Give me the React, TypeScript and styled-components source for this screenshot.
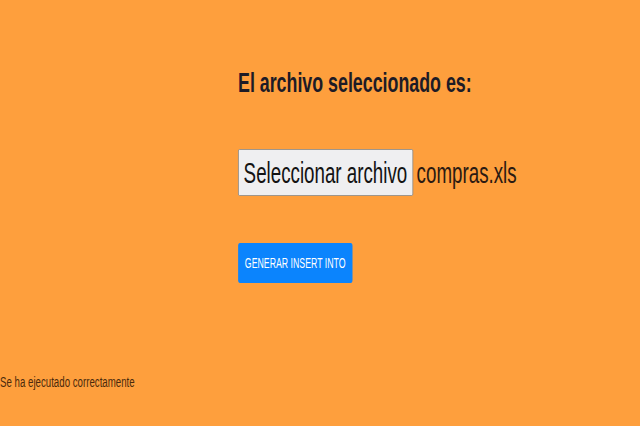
import React from 'react'
import styled, { createGlobalStyle } from 'styled-components'

// the shot is squeezed sideways: the page is laid out at 1024px and scaled to 640
const SQUEEZE = 0.625

const GlobalStyle = createGlobalStyle`
  html, body {
    margin: 0;
    padding: 0;
    background: #fe9f3d;
  }
  body {
    font-family: "Liberation Sans", Arial, sans-serif;
    color: #212529;
  }
`

const Viewport = styled.div`
  width: 640px;
  height: 426px;
  overflow: hidden;
  background: #fe9f3d;
`

const Canvas = styled.div`
  width: ${640 / SQUEEZE}px;
  height: 426px;
  transform: scaleX(${SQUEEZE});
  transform-origin: left top;
  display: flex;
  flex-direction: column;
`

const Main = styled.main`
  display: flex;
  flex-direction: column;
  align-items: flex-start;
  padding: 65px 0 0 ${238 / SQUEEZE}px;
`

const Title = styled.h1`
  margin: 0;
  font-size: 28.5px;
  font-weight: 700;
  line-height: 35px;
  color: #1d1b26;
`

const FileRow = styled.div`
  display: flex;
  align-items: center;
  gap: 6px;
  margin-top: 49px;
`

const FileButton = styled.label`
  box-sizing: border-box;
  height: 47px;
  padding: 0 8px;
  display: flex;
  align-items: center;
  background: #efeff1;
  border: 1px solid #8a8a8a;
  border-radius: 2px;
  font-size: 30px;
  color: #131313;
`

const FileName = styled.span`
  font-size: 30px;
  color: #2b1a12;
`

const ActionButton = styled.button`
  margin-top: 47px;
  height: 40px;
  padding: 0 11px;
  border: none;
  border-radius: 3px;
  background: #0b84fd;
  color: #ffffff;
  font-family: inherit;
  font-size: 14px;
  cursor: pointer;
`

const Status = styled.p`
  margin: 90px 0 0 0;
  font-size: 15.5px;
  line-height: 18px;
  color: #4a2a0c;
`

const App: React.FC = () => {
  return (
    <Viewport>
      <GlobalStyle />
      <Canvas>
        <Main>
          <Title>El archivo seleccionado es:</Title>
          <FileRow>
            <FileButton>Seleccionar archivo</FileButton>
            <FileName>compras.xls</FileName>
          </FileRow>
          <ActionButton>GENERAR INSERT INTO</ActionButton>
        </Main>
        <Status>Se ha ejecutado correctamente</Status>
      </Canvas>
    </Viewport>
  )
}

export default App
